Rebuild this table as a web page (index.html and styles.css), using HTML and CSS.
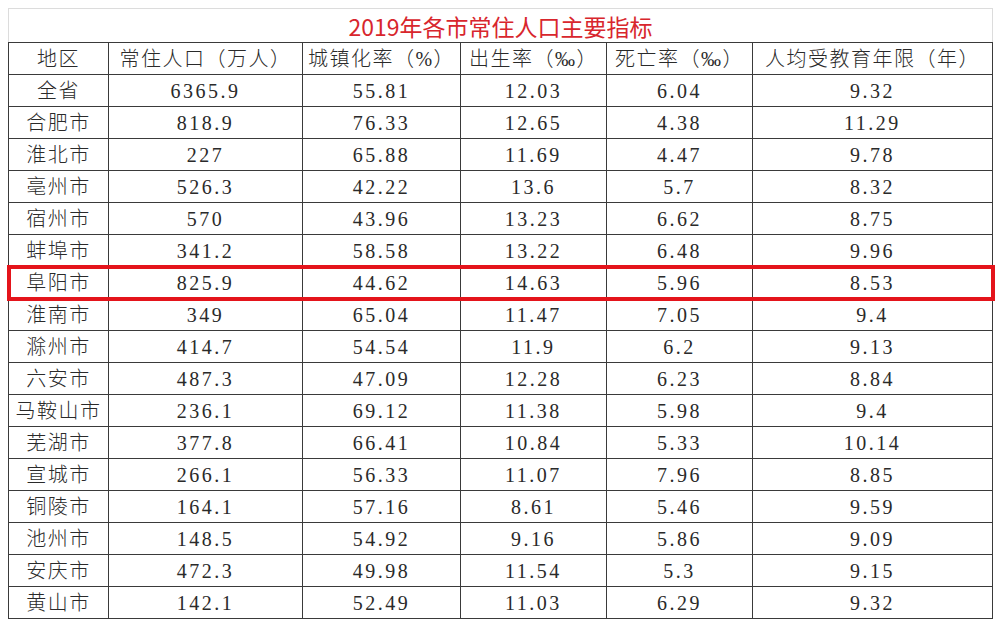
FILE: index.html
```html
<!DOCTYPE html>
<html lang="zh">
<head>
<meta charset="utf-8">
<title>2019年各市常住人口主要指标</title>
<link rel="stylesheet" href="styles.css">
</head>
<body>
<div class="sheet">
  <table class="data">
    <colgroup>
      <col class="c1"><col class="c2"><col class="c3"><col class="c4"><col class="c5"><col class="c6">
    </colgroup>
    <thead>
      <tr class="title-row"><th colspan="6" class="title">2019年各市常住人口主要指标</th></tr>
      <tr class="head"><th>地区</th><th>常住人口（万人）</th><th>城镇化率（%）</th><th>出生率（‰）</th><th>死亡率（‰）</th><th>人均受教育年限（年）</th></tr>
    </thead>
    <tbody>
      <tr><td>全省</td><td>6365.9</td><td>55.81</td><td>12.03</td><td>6.04</td><td>9.32</td></tr>
      <tr><td>合肥市</td><td>818.9</td><td>76.33</td><td>12.65</td><td>4.38</td><td>11.29</td></tr>
      <tr><td>淮北市</td><td>227</td><td>65.88</td><td>11.69</td><td>4.47</td><td>9.78</td></tr>
      <tr><td>亳州市</td><td>526.3</td><td>42.22</td><td>13.6</td><td>5.7</td><td>8.32</td></tr>
      <tr><td>宿州市</td><td>570</td><td>43.96</td><td>13.23</td><td>6.62</td><td>8.75</td></tr>
      <tr><td>蚌埠市</td><td>341.2</td><td>58.58</td><td>13.22</td><td>6.48</td><td>9.96</td></tr>
      <tr class="mark"><td>阜阳市</td><td>825.9</td><td>44.62</td><td>14.63</td><td>5.96</td><td>8.53</td></tr>
      <tr><td>淮南市</td><td>349</td><td>65.04</td><td>11.47</td><td>7.05</td><td>9.4</td></tr>
      <tr><td>滁州市</td><td>414.7</td><td>54.54</td><td>11.9</td><td>6.2</td><td>9.13</td></tr>
      <tr><td>六安市</td><td>487.3</td><td>47.09</td><td>12.28</td><td>6.23</td><td>8.84</td></tr>
      <tr><td>马鞍山市</td><td>236.1</td><td>69.12</td><td>11.38</td><td>5.98</td><td>9.4</td></tr>
      <tr><td>芜湖市</td><td>377.8</td><td>66.41</td><td>10.84</td><td>5.33</td><td>10.14</td></tr>
      <tr><td>宣城市</td><td>266.1</td><td>56.33</td><td>11.07</td><td>7.96</td><td>8.85</td></tr>
      <tr><td>铜陵市</td><td>164.1</td><td>57.16</td><td>8.61</td><td>5.46</td><td>9.59</td></tr>
      <tr><td>池州市</td><td>148.5</td><td>54.92</td><td>9.16</td><td>5.86</td><td>9.09</td></tr>
      <tr><td>安庆市</td><td>472.3</td><td>49.98</td><td>11.54</td><td>5.3</td><td>9.15</td></tr>
      <tr><td>黄山市</td><td>142.1</td><td>52.49</td><td>11.03</td><td>6.29</td><td>9.32</td></tr>
    </tbody>
  </table>
  <div class="highlight"></div>
</div>
</body>
</html>
```

FILE: styles.css
```css
html, body {
  margin: 0;
  padding: 0;
  background: #ffffff;
}

.sheet {
  position: relative;
  padding: 8px;
  width: 984px;
}

.data {
  border-collapse: collapse;
  table-layout: fixed;
  width: 984px;
  font-family: "Liberation Serif", "Noto Sans CJK SC", serif;
  font-size: 20px;
  color: #2a2a2a;
}

.c1 { width: 100px; }
.c2 { width: 194px; }
.c3 { width: 158px; }
.c4 { width: 146px; }
.c5 { width: 146px; }
.c6 { width: 240px; }

.data th,
.data td {
  border: 1px solid #3a3a3a;
  text-align: center;
  vertical-align: middle;
  padding: 0;
  font-weight: 300;
  letter-spacing: 1.5px;
  white-space: nowrap;
  line-height: 1;
}

.data td + td {
  letter-spacing: 2.5px;
}

.data tr {
  height: 32px;
}

.data .title-row {
  height: 34px;
}

.data .title {
  border: 1px solid #dcdcdc;
  border-bottom: 1px solid #3a3a3a;
  font-family: "Noto Sans CJK SC", sans-serif;
  font-weight: 400;
  font-size: 23px;
  letter-spacing: 0;
  color: #d8262d;
  padding-top: 2px;
}

.highlight {
  position: absolute;
  left: 7px;
  top: 265px;
  width: 980px;
  height: 28px;
  border: 4px solid #e4141b;
  pointer-events: none;
}
```
